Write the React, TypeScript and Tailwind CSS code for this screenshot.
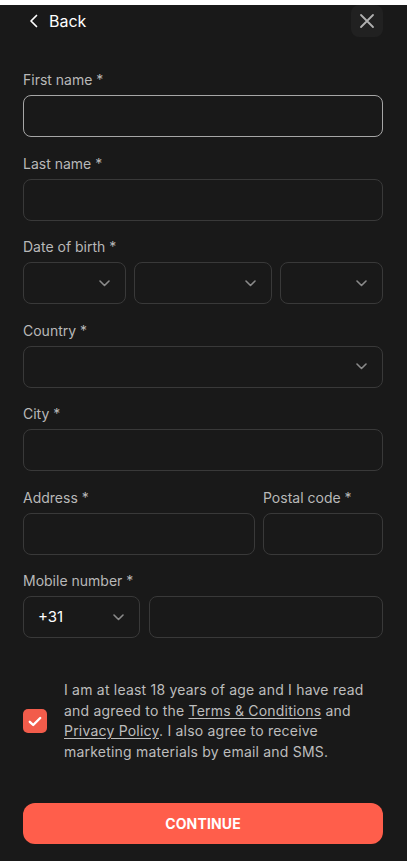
import React from "react";

function Chevron() {
  return (
    <svg width="11" height="7" viewBox="0 0 11 7" fill="none" className="shrink-0">
      <path d="M1 1l4.5 4.5L10 1" stroke="#8a8a8a" strokeWidth="1.6" strokeLinecap="round" strokeLinejoin="round" />
    </svg>
  );
}

function Label({ children }: { children: React.ReactNode }) {
  return <div className="text-sm leading-5 text-[#b8b8b8] mb-[5px] whitespace-nowrap">{children}</div>;
}

function Input({ focused = false }: { focused?: boolean }) {
  return (
    <div
      className={
        focused
          ? "h-[42px] rounded-lg border border-[#a6a6a6] bg-[#191919]"
          : "h-[42px] rounded-lg border border-[#393939] bg-[#191919]"
      }
    />
  );
}

function Select({ text }: { text?: string }) {
  return (
    <div className="h-[42px] rounded-lg border border-[#393939] bg-[#191919] flex items-center justify-between pl-[14px] pr-[15px]">
      <span className="text-[15px] text-white">{text ?? ""}</span>
      <Chevron />
    </div>
  );
}

export default function App() {
  return (
    <div className="min-h-screen bg-[#191919] pl-[23px] pr-[24px] font-['Inter','Noto_Sans',sans-serif]">
      <div className="flex h-[32px] mt-[5px] items-center justify-between">
        <div className="flex items-center gap-[11px] pl-[6px]">
          <svg width="9" height="14" viewBox="0 0 9 14" fill="none">
            <path d="M7.5 1.5L2 7l5.5 5.5" stroke="white" strokeWidth="1.7" strokeLinecap="round" strokeLinejoin="round" />
          </svg>
          <span className="text-base text-white">Back</span>
        </div>
        <div className="w-[32px] h-[32px] rounded-lg bg-[#212121] flex items-center justify-center">
          <svg width="16" height="16" viewBox="0 0 16 16" fill="none">
            <path d="M2 2l12 12M14 2L2 14" stroke="#b0b0b0" strokeWidth="1.8" strokeLinecap="round" />
          </svg>
        </div>
      </div>

      <div className="mt-[33px] flex flex-col gap-[16.5px]">
        <div>
          <Label>First name *</Label>
          <Input focused />
        </div>
        <div>
          <Label>Last name *</Label>
          <Input />
        </div>
        <div>
          <Label>Date of birth *</Label>
          <div className="grid grid-cols-[3fr_4fr_3fr] gap-2">
            <Select />
            <Select />
            <Select />
          </div>
        </div>
        <div>
          <Label>Country *</Label>
          <Select />
        </div>
        <div>
          <Label>City *</Label>
          <Input />
        </div>
        <div className="grid grid-cols-[1fr_120px] gap-2">
          <div>
            <Label>Address *</Label>
            <Input />
          </div>
          <div>
            <Label>Postal code *</Label>
            <Input />
          </div>
        </div>
        <div>
          <Label>Mobile number *</Label>
          <div className="grid grid-cols-[117px_1fr] gap-[9px]">
            <Select text="+31" />
            <Input />
          </div>
        </div>
      </div>

      <div className="mt-[42px] flex items-center gap-[17px]">
        <div className="w-[24px] h-[24px] shrink-0 rounded-[5px] bg-[#f25c4b] flex items-center justify-center">
          <svg width="14" height="11" viewBox="0 0 14 11" fill="none">
            <path d="M1.8 5.8l3.4 3.2L12.2 2" stroke="white" strokeWidth="2.4" strokeLinecap="round" strokeLinejoin="round" />
          </svg>
        </div>
        <p className="max-w-[312px] text-sm leading-[20.5px] tracking-[0.015em] text-[#bdbdbd]">
          I am at least 18 years of age and I have read and agreed to the{" "}
          <span className="underline underline-offset-2">Terms &amp; Conditions</span> and{" "}
          <span className="underline underline-offset-2">Privacy Policy</span>. I also agree to receive marketing
          materials by email and SMS.
        </p>
      </div>

      <button className="mt-[41px] w-full h-[41px] rounded-xl bg-[#ff5e4b] text-white text-sm font-bold tracking-[0.01em]">
        CONTINUE
      </button>
    </div>
  );
}
